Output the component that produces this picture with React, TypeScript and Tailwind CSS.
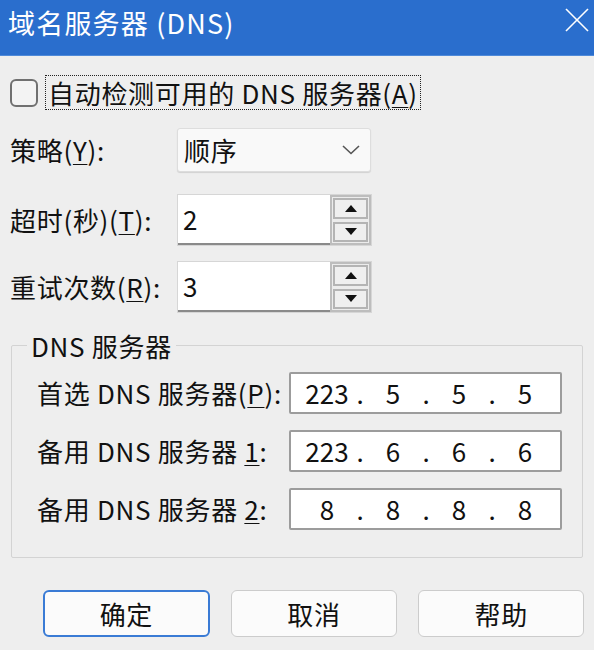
import React from "react";

function U({ children }: { children: React.ReactNode }) {
  return <span className="underline underline-offset-[3px] decoration-1">{children}</span>;
}

function Spinner({ value }: { value: string }) {
  return (
    <div className="flex h-[52px] w-[195px] border border-[#d6d6d6] bg-white">
      <div className="flex flex-1 items-center border-b-2 border-b-[#8a8a8a] pl-[5px] text-[26px] leading-none">
        {value}
      </div>
      <div className="flex w-[41px] flex-col gap-[3px] border-2 border-[#bdbdbd] bg-[#ececec] p-[1px]">
        <div className="flex flex-1 items-center justify-center border-2 border-[#b4b4b4] bg-[#efefef]">
          <svg width="12" height="7" viewBox="0 0 12 7">
            <polygon points="0,7 12,7 6,0" fill="#111" />
          </svg>
        </div>
        <div className="flex flex-1 items-center justify-center border-2 border-[#b4b4b4] bg-[#efefef]">
          <svg width="12" height="7" viewBox="0 0 12 7">
            <polygon points="0,0 12,0 6,7" fill="#111" />
          </svg>
        </div>
      </div>
    </div>
  );
}

function IpBox({ parts }: { parts: string[] }) {
  return (
    <div className="flex h-[42px] w-[273px] items-center rounded-[2px] border-2 border-[#9c9c9c] bg-white pl-[8px] text-[26px] leading-none tracking-normal">
      {parts.map((p, i) => (
        <React.Fragment key={i}>
          <span className="w-[56px] text-center">{p}</span>
          {i < 3 && <span className="w-[10px] text-center">.</span>}
        </React.Fragment>
      ))}
    </div>
  );
}

function IpRow({ label, parts }: { label: React.ReactNode; parts: string[] }) {
  return (
    <div className="flex items-center">
      <div className="w-[252px] whitespace-nowrap">{label}</div>
      <IpBox parts={parts} />
    </div>
  );
}

export default function App() {
  return (
    <div className="h-[650px] w-[594px] overflow-hidden bg-[#eeeeee] font-['Noto_Sans_CJK_SC','Noto_Sans',sans-serif] text-[26px] leading-none tracking-[0.7px] text-[#111]">
      {/* Title bar */}
      <div className="flex h-[56px] items-start justify-between border-b border-b-[#4f8ad9] bg-[#2a6ecd] pl-[8px] pr-[8px] pt-[8px] text-white">
        <div className="text-[27px] leading-[30px] tracking-[1.2px]">域名服务器 (DNS)</div>
        <svg width="24" height="24" viewBox="0 0 24 24" className="mr-[-3px]">
          <line x1="1" y1="1" x2="23" y2="23" stroke="white" strokeWidth="1.6" />
          <line x1="23" y1="1" x2="1" y2="23" stroke="white" strokeWidth="1.6" />
        </svg>
      </div>

      <div className="px-[10px]">
        {/* Checkbox row */}
        <div className="mt-[19px] flex h-[35px] items-center">
          <div className="h-[28px] w-[28px] rounded-[6px] border-2 border-[#707070] bg-[#f3f3f3]" />
          <div className="ml-[7px] flex h-[35px] items-center border border-dotted border-[#222] px-[2px] whitespace-nowrap">
            自动检测可用的 DNS 服务器(<U>A</U>)
          </div>
        </div>

        {/* Strategy row */}
        <div className="mt-[18px] flex items-center">
          <div className="w-[167px] whitespace-nowrap">
            策略(<U>Y</U>):
          </div>
          <div className="flex h-[44px] w-[194px] items-center justify-between rounded-[3px] border border-[#dddddd] bg-[#f9f9f9] pl-[6px] pr-[10px] shadow-[0_1px_1px_rgba(0,0,0,0.12)]">
            <span>顺序</span>
            <svg width="18" height="10" viewBox="0 0 18 10">
              <polyline points="1,1 9,8.5 17,1" fill="none" stroke="#555" strokeWidth="1.6" />
            </svg>
          </div>
        </div>

        {/* Timeout row */}
        <div className="mt-[22px] flex items-center">
          <div className="w-[167px] whitespace-nowrap">
            超时(秒)(<U>T</U>):
          </div>
          <Spinner value="2" />
        </div>

        {/* Retry row */}
        <div className="mt-[15px] flex items-center">
          <div className="w-[167px] whitespace-nowrap">
            重试次数(<U>R</U>):
          </div>
          <Spinner value="3" />
        </div>

        {/* Group box */}
        <div className="relative mx-[1px] mt-[32px] h-[213px] rounded-[2px] border border-[#d3d3d3]">
          <div className="absolute left-[15px] top-[-14px] bg-[#eeeeee] px-[4px] leading-[28px]">
            DNS 服务器
          </div>
          <div className="flex flex-col gap-[16px] pl-[25px] pt-[26px]">
            <IpRow
              label={
                <>
                  首选 DNS 服务器(<U>P</U>):
                </>
              }
              parts={["223", "5", "5", "5"]}
            />
            <IpRow
              label={
                <>
                  备用 DNS 服务器 <U>1</U>:
                </>
              }
              parts={["223", "6", "6", "6"]}
            />
            <IpRow
              label={
                <>
                  备用 DNS 服务器 <U>2</U>:
                </>
              }
              parts={["8", "8", "8", "8"]}
            />
          </div>
        </div>

        {/* Buttons */}
        <div className="mt-[32px] flex gap-[21px] pl-[33px]">
          <button className="flex h-[47px] w-[168px] items-center justify-center rounded-[6px] border-2 border-[#3a7bd5] bg-[#fbfbfb]">
            确定
          </button>
          <button className="flex h-[47px] w-[168px] items-center justify-center rounded-[6px] border border-[#cccccc] bg-[#fbfbfb]">
            取消
          </button>
          <button className="flex h-[47px] w-[167px] items-center justify-center rounded-[6px] border border-[#cccccc] bg-[#fbfbfb]">
            帮助
          </button>
        </div>
      </div>
    </div>
  );
}
